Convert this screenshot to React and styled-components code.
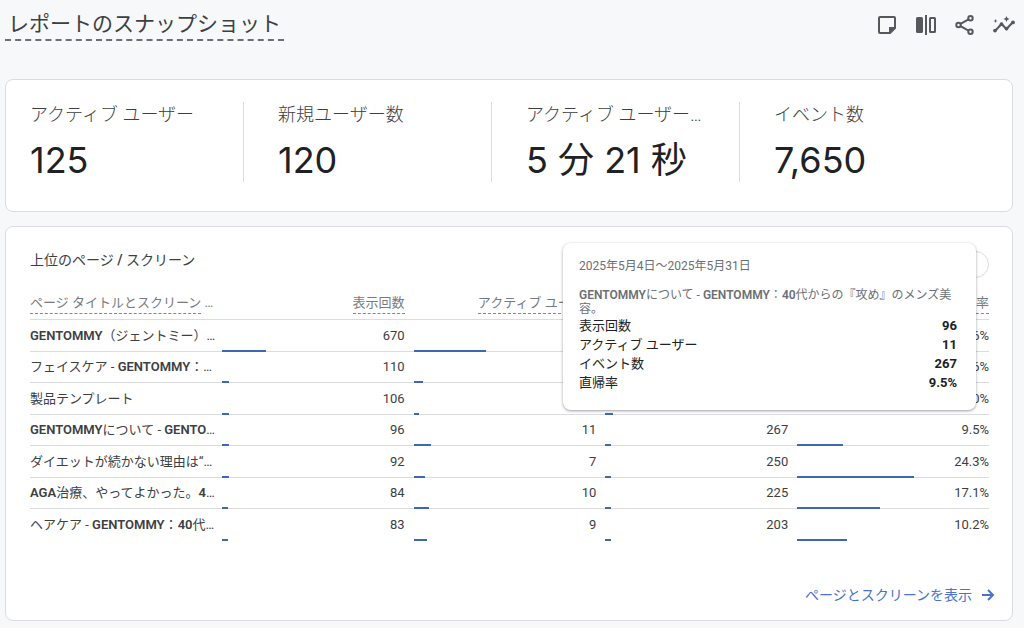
import React from "react";
import styled, { createGlobalStyle, css } from "styled-components";

const metrics = [
  { label: "アクティブ ユーザー", value: "125" },
  { label: "新規ユーザー数", value: "120" },
  { label: "アクティブ ユーザー…", value: "5 分 21 秒" },
  { label: "イベント数", value: "7,650" },
];

const columns = ["表示回数", "アクティブ ユーザー", "イベント数", "直帰率"];

// bars: percent of the column's width
const pages = [
  { name: "GENTOMMY（ジェントミー）…", values: ["670", "", "", "13.6%"], bars: [23, 38, 22, 34] },
  { name: "フェイスケア - GENTOMMY：…", values: ["110", "", "", "16.6%"], bars: [4, 5, 4, 41] },
  { name: "製品テンプレート", values: ["106", "", "", "0.0%"], bars: [4, 3, 4, 0] },
  { name: "GENTOMMYについて - GENTO…", values: ["96", "11", "267", "9.5%"], bars: [4, 9, 3, 24] },
  { name: "ダイエットが続かない理由は“…", values: ["92", "7", "250", "24.3%"], bars: [4, 6, 3, 61] },
  { name: "AGA治療、やってよかった。4…", values: ["84", "10", "225", "17.1%"], bars: [3, 8, 3, 43] },
  { name: "ヘアケア - GENTOMMY：40代…", values: ["83", "9", "203", "10.2%"], bars: [3, 7, 3, 26] },
];

const tooltipRows = [
  { label: "表示回数", value: "96" },
  { label: "アクティブ ユーザー", value: "11" },
  { label: "イベント数", value: "267" },
  { label: "直帰率", value: "9.5%" },
];

// Latin letters and digits are set heavier than the Japanese around them
const MixedText = ({ children }) =>
  children
    .split(/([A-Za-z0-9/]+)/)
    .map((part, i) => (i % 2 ? <Latin key={i}>{part}</Latin> : part));

const NoteIcon = () => (
  <Icon viewBox="0 0 20 20">
    <path
      d="M3 2h14a1 1 0 0 1 1 1v10l-5 5H3a1 1 0 0 1-1-1V3a1 1 0 0 1 1-1z"
      fill="none"
      stroke="currentColor"
      strokeWidth="2"
    />
    <path d="M12 12h6.500l-6.500 6.500z" fill="currentColor" />
  </Icon>
);

const CompareIcon = () => (
  <Icon viewBox="0 0 20 20">
    <rect x="0" y="2" width="7" height="16" rx="1.500" fill="currentColor" />
    <rect x="9" y="0" width="2" height="20" fill="currentColor" />
    <rect x="14" y="3" width="5" height="14" rx="0.500" fill="none" stroke="currentColor" strokeWidth="2" />
  </Icon>
);

const ShareIcon = () => (
  <Icon viewBox="0 0 20 20">
    <g fill="none" stroke="currentColor" strokeWidth="2">
      <circle cx="3.500" cy="10" r="2.200" />
      <circle cx="15.500" cy="3.200" r="2.200" />
      <circle cx="15.500" cy="16.800" r="2.200" />
      <path d="M5.500 8.800l8-4.400M5.500 11.200l8 4.400" />
    </g>
  </Icon>
);

const InsightsIcon = () => (
  <Icon viewBox="0 0 20 20">
    <path d="M1 16l6.500-7 5 5L19 7" fill="none" stroke="currentColor" strokeWidth="2" />
    <g fill="currentColor">
      <circle cx="1" cy="15.600" r="1.900" />
      <circle cx="7.500" cy="9.200" r="1.900" />
      <circle cx="12.500" cy="13.600" r="1.900" />
      <circle cx="19" cy="7.400" r="1.900" />
      <path d="M12.500 1l.9 2.100 2.100.9-2.100.9-.9 2.100-.9-2.100L9.500 4l2.100-.9z" />
      <path d="M1.500 4l.6 1.400 1.400.6-1.400.6L1.500 8l-.6-1.400L-.5 6l1.400-.6z" />
    </g>
  </Icon>
);

const Toolbar = () => (
  <Tools>
    <ToolButton aria-label="メモ">
      <NoteIcon />
    </ToolButton>
    <ToolButton aria-label="比較">
      <CompareIcon />
    </ToolButton>
    <ToolButton aria-label="共有">
      <ShareIcon />
    </ToolButton>
    <ToolButton aria-label="分析情報">
      <InsightsIcon />
    </ToolButton>
  </Tools>
);

const PageTable = () => (
  <Table>
    <thead>
      <tr>
        <HeadCell scope="col">
          <Underlined>ページ タイトルとスクリーン</Underlined> …
        </HeadCell>
        {columns.map(label => (
          <HeadCell key={label} scope="col" $number>
            <Underlined>{label}</Underlined>
          </HeadCell>
        ))}
      </tr>
    </thead>
    <tbody>
      {pages.map(({ name, values, bars }) => (
        <Row key={name}>
          <NameCell scope="row">
            <MixedText>{name}</MixedText>
          </NameCell>
          {values.map((value, i) => (
            <NumberCell key={columns[i]}>
              {value}
              <Bar style={{ width: `${bars[i]}%` }} />
            </NumberCell>
          ))}
        </Row>
      ))}
    </tbody>
  </Table>
);

const ChartTooltip = () => (
  <Tooltip role="tooltip">
    <TooltipDate>2025年5月4日〜2025年5月31日</TooltipDate>
    <TooltipTitle>
      <MixedText>GENTOMMYについて - GENTOMMY：40代からの『攻め』のメンズ美容。</MixedText>
    </TooltipTitle>
    {tooltipRows.map(({ label, value }) => (
      <TooltipRow key={label}>
        <span>{label}</span>
        <strong>{value}</strong>
      </TooltipRow>
    ))}
  </Tooltip>
);

const App = () => {
  return (
    <>
      <GlobalStyle />
      <Page>
        <Header>
          <PageTitle>レポートのスナップショット</PageTitle>
          <Toolbar />
        </Header>
        <Summary>
          {metrics.map(({ label, value }) => (
            <Metric key={label}>
              <MetricLabel>{label}</MetricLabel>
              <MetricValue>{value}</MetricValue>
            </Metric>
          ))}
        </Summary>
        <PagesCard>
          <CardHeader>
            <CardTitle>
              <MixedText>上位のページ / スクリーン</MixedText>
            </CardTitle>
            <StatusButton aria-label="データの状態" />
          </CardHeader>
          <PageTable />
          <CardFooter>
            <MoreLink href="#pages">
              ページとスクリーンを表示
              <Arrow viewBox="0 0 14 14">
                <path d="M1 7h11M7 2l5 5-5 5" fill="none" stroke="currentColor" strokeWidth="2" />
              </Arrow>
            </MoreLink>
          </CardFooter>
          <ChartTooltip />
        </PagesCard>
      </Page>
    </>
  );
};

export default App;

const GlobalStyle = createGlobalStyle`
  * {
    box-sizing: border-box;
  }

  body {
    margin: 0;
    color: #3c4043;
    background-color: #f6f8fa;
    font-family: Roboto, "Noto Sans CJK JP", sans-serif;
    font-size: 13px;
  }
`;

const Page = styled.main`
  padding: 0 11px 7px 5px;
`;

const Header = styled.header`
  display: flex;
  justify-content: space-between;
  align-items: flex-start;
  height: 79px;
  padding-top: 10px;
`;

const PageTitle = styled.h1`
  margin: 0;
  padding: 0 3px;
  border-bottom: 2px dashed #6b6f74;
  font-size: 21px;
  font-weight: 400;
  line-height: 29px;
`;

const Tools = styled.div`
  display: flex;
  gap: 19px;
  margin-right: -1px;
  padding-top: 5px;
`;

const ToolButton = styled.button`
  width: 20px;
  height: 20px;
  padding: 0;
  color: #55585d;
  background: none;
  border: none;
`;

const Icon = styled.svg`
  display: block;
  width: 20px;
  height: 20px;
  overflow: visible;
`;

const Latin = styled.span`
  font-weight: 600;
`;

const card = css`
  border: 1px solid #dadce0;
  border-radius: 8px;
  background-color: #fff;
`;

const Summary = styled.section`
  ${card}
  display: grid;
  grid-template-columns: repeat(4, 1fr);
  gap: 34px;
  padding: 22px 24px 29px;
`;

const Metric = styled.div`
  min-width: 0;
  height: 80px;
  border-right: 1px solid #dadce0;

  &:last-child {
    border-right: none;
  }
`;

const MetricLabel = styled.div`
  padding-top: 1px;
  color: #3c4043;
  font-size: 18px;
  font-weight: 300;
  line-height: 24px;
  white-space: nowrap;
`;

const MetricValue = styled.div`
  margin-top: 9px;
  color: #202124;
  font-family: Inter, "Noto Sans CJK JP", sans-serif;
  font-size: 36px;
  line-height: 48px;
  white-space: nowrap;
`;

const PagesCard = styled.section`
  ${card}
  position: relative;
  margin-top: 14px;
  padding: 24px 23px 14px 24px;
`;

const CardHeader = styled.div`
  display: flex;
  justify-content: space-between;
  align-items: flex-start;
  height: 42px;
`;

const CardTitle = styled.h2`
  margin: 0;
  font-size: 14px;
  font-weight: 400;
  line-height: 18px;
`;

const StatusButton = styled.button`
  width: 27px;
  height: 27px;
  padding: 0;
  border: 1px solid #dadce0;
  border-radius: 50%;
  background-color: #fff;
`;

const Table = styled.table`
  width: 100%;
  table-layout: fixed;
  border-collapse: separate;
  border-spacing: 0;
`;

const HeadCell = styled.th`
  height: 27px;
  padding: 0 9px 0 0;
  border-bottom: 1px solid #dadce0;
  color: #777b80;
  font-weight: 400;
  line-height: 20px;
  text-align: ${props => (props.$number ? "right" : "left")};
  vertical-align: top;
  white-space: nowrap;

  &:last-child {
    padding-right: 0;
  }
`;

const Underlined = styled.span`
  display: inline-block;
  border-bottom: 1px dashed #80868b;
`;

const cell = css`
  padding: 0 9px 0 0;
  border-bottom: 1px solid #dadce0;
  line-height: 20px;
  white-space: nowrap;
`;

const NameCell = styled.th`
  ${cell}
  font-weight: 400;
  text-align: left;
`;

const NumberCell = styled.td`
  ${cell}
  position: relative;
  text-align: right;

  &:last-child {
    padding-right: 0;
  }
`;

const Row = styled.tr`
  height: 31px;

  &:nth-child(odd) {
    height: 32px;
  }

  &:last-child > * {
    border-bottom-color: transparent;
  }
`;

const Bar = styled.span`
  position: absolute;
  bottom: -1px;
  left: 0;
  height: 2px;
  background-color: #4166b0;
`;

const CardFooter = styled.div`
  display: flex;
  justify-content: flex-end;
  margin-top: 43px;
  margin-right: -6px;
`;

const MoreLink = styled.a`
  display: flex;
  align-items: center;
  gap: 9px;
  color: #4a72cc;
  font-size: 14px;
  line-height: 22px;
  text-decoration: none;
`;

const Arrow = styled.svg`
  width: 14px;
  height: 14px;
`;

const Tooltip = styled.div`
  position: absolute;
  top: 16px;
  right: 36px;
  width: 413px;
  padding: 14px 19px 18px 16px;
  border-radius: 8px;
  background-color: #fff;
  box-shadow: 0 1px 3px rgba(60, 64, 67, 0.5);
`;

const TooltipDate = styled.div`
  color: #6b6f74;
  font-size: 12px;
  line-height: 18px;
`;

const TooltipTitle = styled.div`
  margin-top: 13px;
  color: #6b6f74;
  font-size: 12px;
  line-height: 14px;
`;

const TooltipRow = styled.div`
  display: flex;
  justify-content: space-between;
  color: #202124;
  line-height: 19px;

  strong {
    font-weight: 700;
  }
`;
